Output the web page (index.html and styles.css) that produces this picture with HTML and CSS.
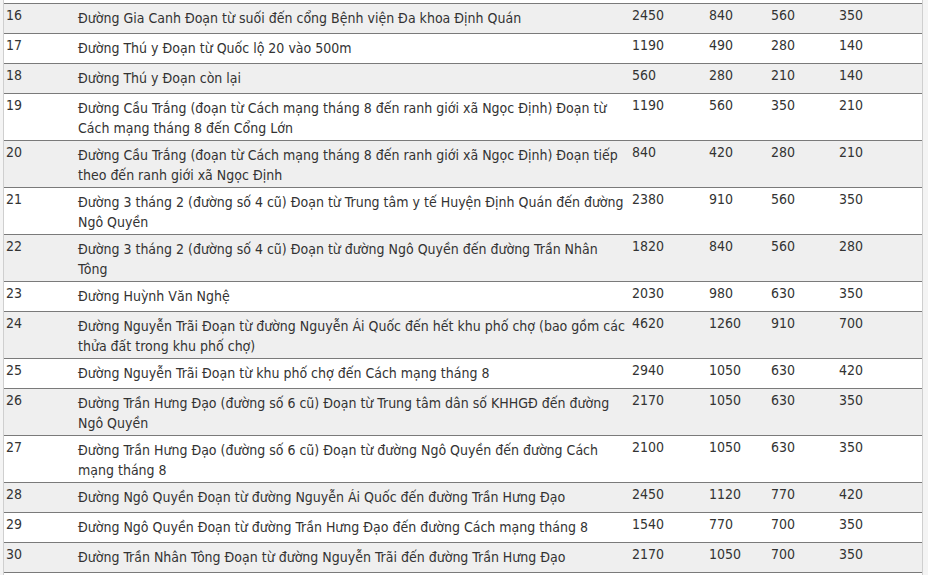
FILE: index.html
```html
<!DOCTYPE html>
<html lang="vi">
<head>
<meta charset="utf-8">
<title>Bảng giá đất</title>
<link rel="stylesheet" href="styles.css">
</head>
<body>
<div class="sheet">
<table class="prices">
<colgroup>
<col class="c-no"><col class="c-name"><col class="c-v1"><col class="c-v2"><col class="c-v3"><col class="c-v4">
</colgroup>
<tbody>
<tr class="alt"><td>16</td><td class="name">Đường Gia Canh Đoạn từ suối đến cổng Bệnh viện Đa khoa Định Quán</td><td>2450</td><td>840</td><td>560</td><td>350</td></tr>
<tr><td>17</td><td class="name">Đường Thú y Đoạn từ Quốc lộ 20 vào 500m</td><td>1190</td><td>490</td><td>280</td><td>140</td></tr>
<tr class="alt"><td>18</td><td class="name">Đường Thú y Đoạn còn lại</td><td>560</td><td>280</td><td>210</td><td>140</td></tr>
<tr><td>19</td><td class="name">Đường Cầu Trắng (đoạn từ Cách mạng tháng 8 đến ranh giới xã Ngọc Định) Đoạn từ Cách mạng tháng 8 đến Cổng Lớn</td><td>1190</td><td>560</td><td>350</td><td>210</td></tr>
<tr class="alt"><td>20</td><td class="name">Đường Cầu Trắng (đoạn từ Cách mạng tháng 8 đến ranh giới xã Ngọc Định) Đoạn tiếp theo đến ranh giới xã Ngọc Định</td><td>840</td><td>420</td><td>280</td><td>210</td></tr>
<tr><td>21</td><td class="name">Đường 3 tháng 2 (đường số 4 cũ) Đoạn từ Trung tâm y tế Huyện Định Quán đến đường Ngô Quyền</td><td>2380</td><td>910</td><td>560</td><td>350</td></tr>
<tr class="alt"><td>22</td><td class="name">Đường 3 tháng 2 (đường số 4 cũ) Đoạn từ đường Ngô Quyền đến đường Trần Nhân Tông</td><td>1820</td><td>840</td><td>560</td><td>280</td></tr>
<tr><td>23</td><td class="name">Đường Huỳnh Văn Nghệ</td><td>2030</td><td>980</td><td>630</td><td>350</td></tr>
<tr class="alt"><td>24</td><td class="name">Đường Nguyễn Trãi Đoạn từ đường Nguyễn Ái Quốc đến hết khu phố chợ (bao gồm các thửa đất trong khu phố chợ)</td><td>4620</td><td>1260</td><td>910</td><td>700</td></tr>
<tr><td>25</td><td class="name">Đường Nguyễn Trãi Đoạn từ khu phố chợ đến Cách mạng tháng 8</td><td>2940</td><td>1050</td><td>630</td><td>420</td></tr>
<tr class="alt"><td>26</td><td class="name">Đường Trần Hưng Đạo (đường số 6 cũ) Đoạn từ Trung tâm dân số KHHGĐ đến đường Ngô Quyền</td><td>2170</td><td>1050</td><td>630</td><td>350</td></tr>
<tr><td>27</td><td class="name">Đường Trần Hưng Đạo (đường số 6 cũ) Đoạn từ đường Ngô Quyền đến đường Cách mạng tháng 8</td><td>2100</td><td>1050</td><td>630</td><td>350</td></tr>
<tr class="alt"><td>28</td><td class="name">Đường Ngô Quyền Đoạn từ đường Nguyễn Ái Quốc đến đường Trần Hưng Đạo</td><td>2450</td><td>1120</td><td>770</td><td>420</td></tr>
<tr><td>29</td><td class="name">Đường Ngô Quyền Đoạn từ đường Trần Hưng Đạo đến đường Cách mạng tháng 8</td><td>1540</td><td>770</td><td>700</td><td>350</td></tr>
<tr class="alt"><td>30</td><td class="name">Đường Trần Nhân Tông Đoạn từ đường Nguyễn Trãi đến đường Trần Hưng Đạo</td><td>2170</td><td>1050</td><td>700</td><td>350</td></tr>
<tr class="blank"><td></td><td></td><td></td><td></td><td></td><td></td></tr>
</tbody>
</table>
</div>
</body>
</html>
```
FILE: styles.css
```css
html, body {
  margin: 0;
  padding: 0;
  height: 100%;
  overflow: hidden;
  background: #f4f4f4;
}
.sheet {
  margin-left: 3px;
  width: 918px;
  background: #fff;
  border-left: 1px solid #cfcfcf;
  border-right: 1px solid #cfcfcf;
  padding-top: 3px;
}
.prices {
  width: 100%;
  border-collapse: collapse;
  table-layout: fixed;
  font-family: "DejaVu Sans Condensed", "DejaVu Sans", sans-serif;
  font-size: 14px;
  line-height: 20px;
  color: #333;
}
.c-no { width: 71px; }
.c-name { width: 555px; }
.c-v1 { width: 77px; }
.c-v2 { width: 62px; }
.c-v3 { width: 68px; }
.c-v4 { width: 85px; }
.prices tr {
  border-top: 1px solid #7a7a7a;
  height: 30px;
}
.prices tr.alt { background: #efefef; }
.prices td {
  vertical-align: top;
  padding: 1px 3px 0 2px;
}
.prices td.name {
  padding: 4px 4px 2px 3px;
}
```
